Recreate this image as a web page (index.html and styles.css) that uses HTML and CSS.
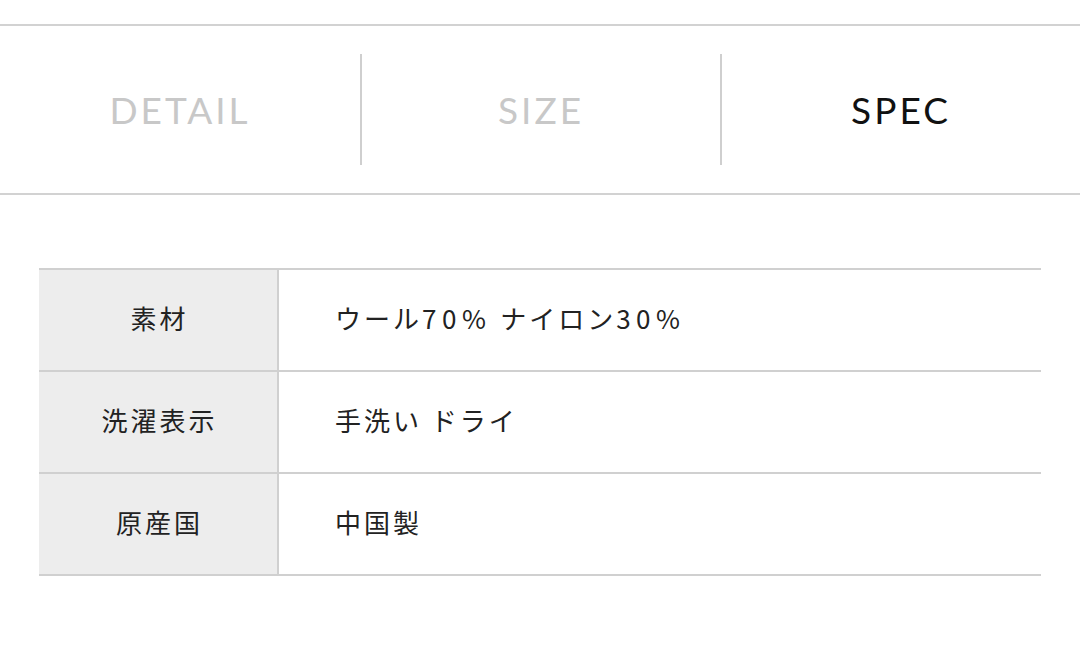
FILE: index.html
```html
<!DOCTYPE html>
<html lang="ja">
<head>
<meta charset="utf-8">
<link rel="stylesheet" href="styles.css">
</head>
<body>
<nav class="tabs">
  <div class="tab">DETAIL</div>
  <div class="tab sep">SIZE</div>
  <div class="tab sep active">SPEC</div>
</nav>
<section class="spec">
  <div class="row">
    <div class="label">素材</div>
    <div class="value">ウール<span class="num">70%</span> ナイロン<span class="num">30%</span></div>
  </div>
  <div class="row">
    <div class="label">洗濯表示</div>
    <div class="value">手洗い ドライ</div>
  </div>
  <div class="row">
    <div class="label">原産国</div>
    <div class="value">中国製</div>
  </div>
</section>
</body>
</html>
```

FILE: styles.css
```css
html, body {
  margin: 0;
  padding: 0;
  background: #ffffff;
}
body {
  font-family: "Noto Sans CJK JP", "Noto Sans", sans-serif;
  color: #222;
}
.tabs {
  margin-top: 24px;
  border-top: 2px solid #d2d2d2;
  border-bottom: 2px solid #d2d2d2;
  height: 167px;
  display: grid;
  grid-template-columns: 360px 360px 360px;
  align-items: center;
}
.tab {
  height: 111px;
  display: flex;
  align-items: center;
  justify-content: center;
  font-family: "Lato", "Liberation Sans", sans-serif;
  font-size: 37px;
  letter-spacing: 3px;
  color: #c8c8c8;
}
.tab.sep {
  border-left: 2px solid #cfcfcf;
}
.tab.active {
  color: #111;
}
.spec {
  margin: 73px 39px 0 39px;
  width: 1002px;
  border-bottom: 2px solid #d0d0d0;
}
.row {
  display: flex;
  border-top: 2px solid #d0d0d0;
  height: 100px;
}
.label {
  width: 238px;
  background: #ededed;
  display: flex;
  align-items: center;
  justify-content: center;
  font-size: 26px;
  letter-spacing: 3px;
  padding: 0 0 5px 3px;
  box-sizing: border-box;
}
.value {
  flex: 1;
  border-left: 2px solid #d0d0d0;
  display: flex;
  align-items: center;
  padding: 0 0 5px 56px;
  font-size: 26px;
  letter-spacing: 3px;
  white-space: pre;
}
.num {
  letter-spacing: 5.5px;
}
```
